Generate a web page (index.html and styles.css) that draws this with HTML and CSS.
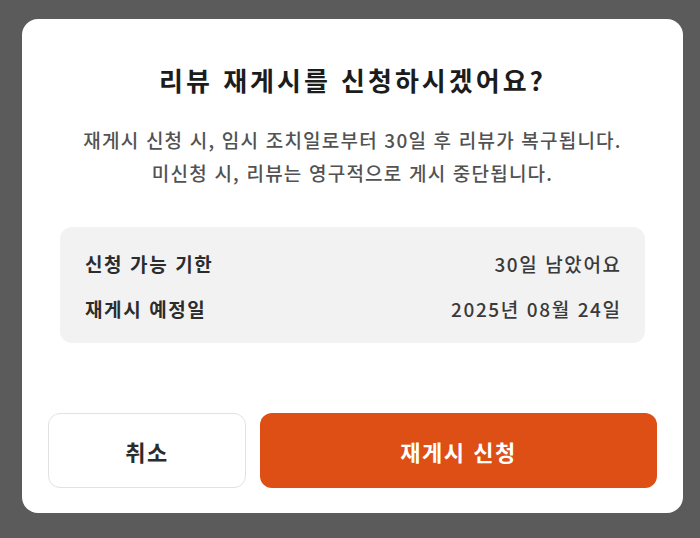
FILE: index.html
```html
<!DOCTYPE html>
<html lang="ko">
<head>
  <meta charset="UTF-8" />
  <meta name="viewport" content="width=device-width, initial-scale=1.0"/>
  <title>리뷰 재게시 신청</title>
  <link rel="stylesheet" href="styles.css">
</head>
<body>

  <div class="dialog">
    <h2 class="dialog-title">리뷰 재게시를 신청하시겠어요?</h2>
    <p class="dialog-desc">
      재게시 신청 시, 임시 조치일로부터 30일 후 리뷰가 복구됩니다.<br>
      미신청 시, 리뷰는 영구적으로 게시 중단됩니다.
    </p>

    <div class="info-box">
      <div class="info-row">
        <span class="info-label">신청 가능 기한</span>
        <span class="info-value">30일 남았어요</span>
      </div>
      <div class="info-row">
        <span class="info-label">재게시 예정일</span>
        <span class="info-value">2025년 08월 24일</span>
      </div>
    </div>

    <div class="actions">
      <button class="btn btn-cancel">취소</button>
      <button class="btn btn-primary">재게시 신청</button>
    </div>
  </div>

</body>
</html>
```

FILE: styles.css
```css
* {
  box-sizing: border-box;
}

body {
  margin: 0;
  padding: 19px 17px 0 22px;
  background: #5b5b5b;
  font-family: 'Noto Sans CJK KR', 'Noto Sans', sans-serif;
  min-height: 100vh;
}

.dialog {
  width: 661px;
  height: 494px;
  background: #fff;
  border-radius: 16px;
  padding: 43px 26px 25px;
  display: flex;
  flex-direction: column;
}

.dialog-title {
  margin: 0;
  font-size: 26px;
  line-height: 36px;
  font-weight: 700;
  letter-spacing: 3px;
  color: #1c1c1c;
  text-align: center;
}

.dialog-desc {
  margin: 25px 0 0;
  font-size: 19px;
  line-height: 33px;
  font-weight: 500;
  letter-spacing: 1.2px;
  color: #525252;
  text-align: center;
}

.info-box {
  margin: 38px 12px 0;
  background: #f2f2f3;
  border-radius: 12px;
  padding: 23px 25px 20px;
  display: flex;
  flex-direction: column;
  gap: 17px;
}

.info-row {
  display: flex;
  justify-content: space-between;
  line-height: 28px;
  font-size: 19px;
  letter-spacing: 1.6px;
}

.info-label {
  font-weight: 700;
  color: #2c2c2c;
}

.info-value {
  font-weight: 500;
  color: #3a3a3a;
  margin-right: -1.6px;
}

.actions {
  margin-top: auto;
  display: flex;
  gap: 14px;
}

.btn {
  height: 75px;
  border-radius: 12px;
  font-family: inherit;
  font-size: 22px;
  font-weight: 700;
  letter-spacing: 1.5px;
  cursor: pointer;
}

.btn-cancel {
  flex: 0 0 198px;
  background: #fff;
  border: 1.5px solid #e2e2e2;
  color: #2c2c2c;
}

.btn-primary {
  flex: 1;
  background: #dd4f14;
  border: none;
  color: #fff;
}
```
